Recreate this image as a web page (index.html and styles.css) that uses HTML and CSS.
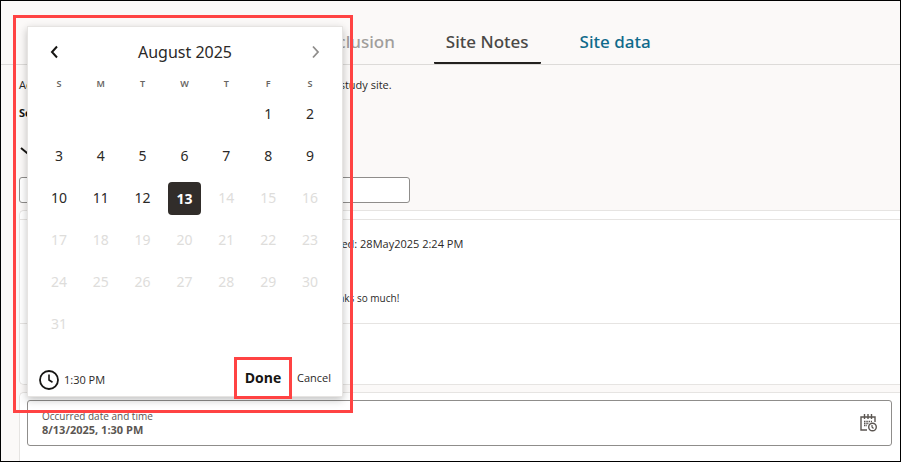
FILE: index.html
```
<!DOCTYPE html>
<html lang="en">
<head>
<meta charset="utf-8">
<title>Site Notes</title>
<link rel="stylesheet" href="styles.css">
</head>
<body>
<nav class="tabs">
  <a class="tab tab-disabled" href="#exclusion">Exclusion</a>
  <a class="tab tab-active" href="#notes">Site Notes</a>
  <a class="tab" href="#data">Site data</a>
</nav>
<main>
  <p class="intro">Add notes to share patient information and updates with your study site.</p>
  <label class="search-label" for="search">Search notes</label>
  <button class="expand" aria-label="Expand">
    <svg width="14" height="8" viewBox="0 0 14 8"><path d="M2 1l6 5 5-5" fill="none" stroke="#161513" stroke-width="2"/></svg>
  </button>
  <input class="search" id="search" type="text">
  <article class="card">
    <section class="note">
      <p>Added: 28May2025 2:24 PM</p>
      <p class="note-text">Thanks so much!</p>
    </section>
    <section class="reply"></section>
  </article>
  <section class="card card-form">
    <div class="field">
      <div class="field-body">
        <label for="occurred">Occurred date and time</label>
        <input id="occurred" type="text" value="8/13/2025, 1:30 PM">
      </div>
      <button class="field-icon" aria-label="Select date and time">
        <svg width="18" height="18" viewBox="0 0 18 18" fill="none" stroke="#5b5652">
          <path d="M8 16H2V3h14v5" stroke-width="1.4"/>
          <path d="M5.500 0v5M9 0v5M12.500 0v5" stroke-width="1.4"/>
          <path d="M5 7.500h8M5 9.500h5M5 11.500h3" stroke-width="1.500" stroke-dasharray="1.500 .8"/>
          <circle cx="13.500" cy="13" r="3.800" stroke-width="1.4" fill="#fff"/>
          <path d="M13 11V13l1.500 1.500" stroke-width="1.2"/>
        </svg>
      </button>
    </div>
  </section>
</main>
<div class="highlight"></div>
<div class="picker" role="dialog" aria-label="Choose date">
  <header class="picker-head">
    <button aria-label="Previous month"><svg width="8" height="14" viewBox="0 0 8 14"><path d="M7 1.500L2 7l5 5.500" fill="none" stroke="#161513" stroke-width="2"/></svg></button>
    <h2>August 2025</h2>
    <button aria-label="Next month"><svg width="8" height="14" viewBox="0 0 8 14"><path d="M1 1.500L6 7l-5 5.500" fill="none" stroke="#8f8d8b" stroke-width="1.800"/></svg></button>
  </header>
  <table class="days">
    <thead><tr><th>S</th><th>M</th><th>T</th><th>W</th><th>T</th><th>F</th><th>S</th></tr></thead>
    <tbody>
      <tr><td></td><td></td><td></td><td></td><td></td><td>1</td><td>2</td></tr>
      <tr><td>3</td><td>4</td><td>5</td><td>6</td><td>7</td><td>8</td><td>9</td></tr>
      <tr><td>10</td><td>11</td><td>12</td><td><span class="selected">13</span></td><td class="off">14</td><td class="off">15</td><td class="off">16</td></tr>
      <tr class="off"><td>17</td><td>18</td><td>19</td><td>20</td><td>21</td><td>22</td><td>23</td></tr>
      <tr class="off"><td>24</td><td>25</td><td>26</td><td>27</td><td>28</td><td>29</td><td>30</td></tr>
      <tr class="off"><td>31</td><td></td><td></td><td></td><td></td><td></td><td></td></tr>
    </tbody>
  </table>
  <footer class="picker-foot">
    <button class="time">
      <svg width="20" height="20" viewBox="0 0 20 20" fill="none" stroke="#161513"><circle cx="10" cy="10" r="9" stroke-width="1.800"/><path d="M10 4.500V10l3.500 2.200" stroke-width="1.600"/></svg>
      1:30 PM
    </button>
    <button class="done">Done</button>
    <button class="cancel">Cancel</button>
  </footer>
</div>
</body>
</html>
```

FILE: styles.css
```
* { box-sizing: border-box; }
body {
  position: relative;
  display: flex;
  flex-direction: column;
  height: 100vh;
  margin: 0;
  border: 1px solid #000;
  overflow: hidden;
  background: #fbf9f8;
  color: #2b2927;
  font: 11px/16px "Open Sans", "Noto Sans", sans-serif;
}
p, h2 { margin: 0; }
button { padding: 0; border: 0; background: none; color: inherit; font: inherit; }
svg { display: block; }

.tabs {
  display: flex;
  gap: 27px;
  height: 64px;
  padding: 20px 0 0 306px;
  border-bottom: 1px solid #dddbd9;
}
.tab {
  height: 43px;
  padding: 0 12px;
  color: #0f6a8b;
  font-family: "Noto Sans", sans-serif;
  font-size: 17px;
  font-weight: 500;
  line-height: 42px;
  text-decoration: none;
}
.tab-disabled { color: #a09e9c; }
.tab-active { border-bottom: 2px solid #23211f; border-radius: 1px; color: #4a4846; }

main { display: flex; flex: 1; flex-direction: column; align-items: flex-start; padding: 12px 0 0 18px; }
.search-label { margin-top: 12px; font-weight: 700; color: #161513; }
.expand { margin: 26px 0 22px; }
.search { width: 391px; height: 26px; border: 1px solid #8f8d8b; border-radius: 3px; background: #fff; }
.card {
  align-self: stretch;
  margin-top: 7px;
  padding-top: 8px;
  border: 1px solid #e6e4e2;
  border-right: 0;
  border-radius: 5px 0 0 5px;
  background: #fff;
}
.note { width: 100%; height: 104px; padding: 16px 0 0 301px; border-top: 1px solid #e6e4e2; }
.note-text { margin-top: 38px; font-size: 10px; }
.reply { height: 61px; border-top: 1px solid #e6e4e2; }
.card-form { flex: 1; padding: 7px 8px 0 7px; border-bottom: 0; border-radius: 5px 0 0; }
.field {
  display: flex;
  align-items: center;
  height: 46px;
  padding: 0 14px;
  border: 1px solid #8f8d8b;
  border-radius: 3px;
}
.field-body { display: flex; flex: 1; flex-direction: column; color: #5b5652; }
.field label { font-size: 10px; line-height: 14px; }
.field input { height: 14px; padding: 0; border: 0; color: #5b5652; font: inherit; font-weight: 700; }

.highlight {
  position: absolute;
  z-index: 2;
  top: 14px;
  left: 12px;
  width: 340px;
  height: 398px;
  border: 3px solid #ff4343;
  pointer-events: none;
}
.picker {
  position: absolute;
  z-index: 1;
  top: 25px;
  left: 26px;
  width: 316px;
  border: 1px solid #e6e4e2;
  background: #fff;
  box-shadow: 0 3px 8px rgba(0, 0, 0, .24);
}
.picker-head { display: flex; align-items: center; justify-content: space-between; height: 48px; padding: 2px 22px 0; }
.picker-head h2 { font-family: "Noto Sans", sans-serif; font-size: 16px; font-weight: 400; }
.days { width: 293px; margin-left: 10px; border-spacing: 0; table-layout: fixed; text-align: center; font-family: "Noto Sans", sans-serif; }
.days th { height: 18px; padding: 0; color: #686562; font-size: 9px; font-weight: 600; line-height: 16px; }
.days td { height: 42px; padding: 0; font-size: 14px; }
.days .off, .off td { color: #dedddb; }
.selected {
  display: block;
  width: 33px;
  margin: 0 auto;
  border-radius: 4px;
  background: #312d2a;
  color: #fff;
  font-weight: 700;
  line-height: 33px;
}
.picker-foot { display: flex; align-items: center; height: 36px; margin-top: 15px; padding: 0 11px; }
.time { display: flex; flex: 1; gap: 5px; align-items: center; padding-top: 4px; line-height: 20px; }
.done { width: 52px; height: 36px; outline: 3px solid #ff4343; color: #161513; font-size: 14px; font-weight: 700; }
.cancel { margin-left: 8px; }
```
